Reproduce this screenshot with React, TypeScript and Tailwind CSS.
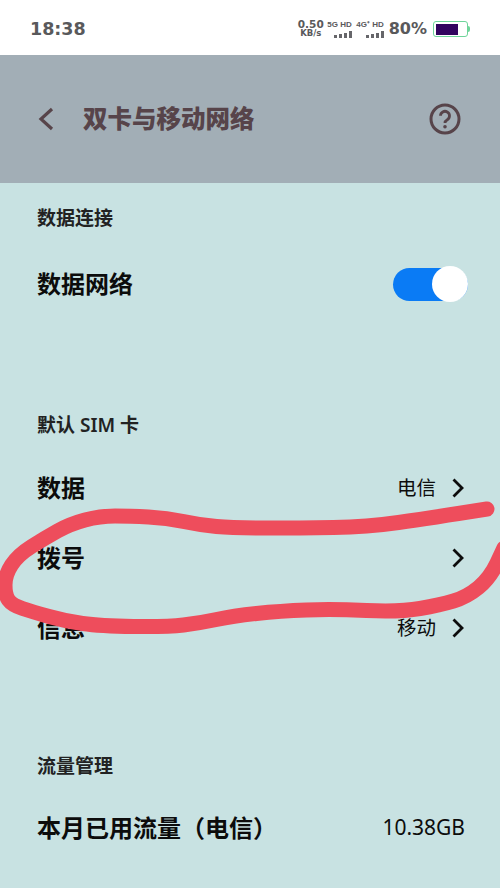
const cjk = { fontFamily: '"Noto Sans", "Noto Sans CJK SC", sans-serif' };
const dejavu = { fontFamily: '"DejaVu Sans", sans-serif' };
const arial = { fontFamily: '"Liberation Sans", sans-serif' };

// centre line of the red marker stroke, read off the reference
const scribble = [
  [487, 509], [430, 518], [367, 527], [300, 528], [233, 528], [200, 525], [167, 518], [130, 516],
  [100, 516], [70, 524], [45, 538], [18, 555], [5, 575], [5, 595], [12, 605], [33, 612],
  [65, 621], [100, 626], [167, 627], [200, 623], [233, 616], [280, 611], [333, 609], [400, 612],
  [440, 605], [467, 597], [490, 578], [504, 548],
];

function scribblePath() {
  let d = `M${scribble[0][0]} ${scribble[0][1]}`;
  for (let i = 1; i < scribble.length - 1; i++) {
    const [x, y] = scribble[i];
    const [nx, ny] = scribble[i + 1];
    d += `Q${x} ${y} ${(x + nx) / 2} ${(y + ny) / 2}`;
  }
  const [lx, ly] = scribble[scribble.length - 1];
  return d + `L${lx} ${ly}`;
}

function Bars({ count = 4 }: { count?: number }) {
  const heights = [3, 4, 5, 7];
  return (
    <div className="flex items-end gap-[2px]">
      {heights.slice(0, count).map((h, i) => (
        <div key={i} className="w-[3px] bg-[#66666a]" style={{ height: h }} />
      ))}
    </div>
  );
}

function Chevron() {
  return (
    <svg width="14" height="22" viewBox="0 0 14 22" fill="none">
      <path d="M2.500 2.500l8.500 8.500-8.500 8.500" stroke="#0c0c0c" strokeWidth="2.800" />
    </svg>
  );
}

function StatusBar() {
  return (
    <div className="h-[55px] bg-white flex items-center pt-[3px] pl-[30px] pr-[30px] text-[#59595b]">
      <span className="text-[17.5px] font-bold" style={dejavu}>
        18:38
      </span>
      <div className="ml-auto flex items-center">
        <div className="flex flex-col items-center font-bold leading-[9px] mr-[6px]" style={dejavu}>
          <span className="text-[10.5px]">0.50</span>
          <span className="text-[8.5px]">KB/s</span>
        </div>
        <div className="flex flex-col items-end gap-[3px] mr-[5px] w-[22px]">
          <span className="text-[8px] font-bold leading-[7px] whitespace-nowrap" style={arial}>5G HD</span>
          <Bars />
        </div>
        <div className="flex flex-col items-end gap-[3px] mr-[5px] w-[27px]">
          <span className="text-[8px] font-bold leading-[7px] whitespace-nowrap" style={arial}>4G⁺ HD</span>
          <Bars />
        </div>
        <span className="text-[16px] font-bold mr-[6px]" style={dejavu}>80%</span>
        <div className="flex items-center">
          <div className="w-[35px] h-[16px] rounded-[3px] border border-[#6fd49a] p-[1.5px] pr-[9px] bg-white">
            <div className="h-full bg-[#32045f]" />
          </div>
          <div className="w-[2px] h-[6px] bg-[#6fd49a] rounded-r-sm" />
        </div>
      </div>
    </div>
  );
}

function SectionLabel({ children }: { children: React.ReactNode }) {
  return <div className="px-[37px] text-[19px] leading-[26px] font-semibold text-[#222]">{children}</div>;
}

function Row({ title, value, arrow = true, big = false }: { title: string; value?: string; arrow?: boolean; big?: boolean }) {
  return (
    <div className="h-[70px] pl-[37px] pr-[35px] flex items-center justify-between text-[#0c0c0c]">
      <span className="text-[24px] font-bold">{title}</span>
      <div className="flex items-center gap-[15px]">
        {value && <span className={big ? "text-[21px]" : "text-[19.5px]"}>{value}</span>}
        {arrow && <Chevron />}
      </div>
    </div>
  );
}

export default function App() {
  return (
    <div className="relative w-[500px] h-[888px] overflow-hidden bg-[#c8e2e2]" style={cjk}>
      <StatusBar />

      <div className="h-[128px] bg-[#a2aeb6] flex items-center pl-[37px] pr-[39px] text-[#57444a]">
        <svg width="18" height="26" viewBox="0 0 18 26" fill="none">
          <path d="M15 3L4 13l11 10" stroke="#57444a" strokeWidth="3.200" />
        </svg>
        <h1 className="ml-[28px] text-[24.5px] font-black">双卡与移动网络</h1>
        <svg className="ml-auto" width="32" height="32" viewBox="0 0 32 32" fill="none">
          <circle cx="16" cy="16" r="14" stroke="#57444a" strokeWidth="3" />
          <path d="M11.500 12.800a4.500 4.500 0 1 1 6.800 3.900c-1.500.9-2.300 1.700-2.300 3.300" stroke="#57444a" strokeWidth="2.800" fill="none" />
          <circle cx="16" cy="23.800" r="1.800" fill="#57444a" />
        </svg>
      </div>

      <div className="pt-[22px]">
        <SectionLabel>数据连接</SectionLabel>
        <div className="h-[106px] pl-[37px] pr-[32px] flex items-center justify-between">
          <span className="text-[24px] font-bold text-[#0c0c0c]">数据网络</span>
          <div className="w-[75px] h-[33px] rounded-full bg-[#0a7bf5] flex items-center justify-end">
            <div className="w-[36px] h-[36px] rounded-full bg-white" />
          </div>
        </div>

        <div className="mt-[75px]">
          <SectionLabel>默认 SIM 卡</SectionLabel>
        </div>
        <div className="mt-[15px]">
          <Row title="数据" value="电信" />
          <Row title="拨号" />
          <Row title="信息" value="移动" />
        </div>

        <div className="mt-[90px]">
          <SectionLabel>流量管理</SectionLabel>
        </div>
        <div className="mt-[14px]">
          <Row title="本月已用流量（电信）" value="10.38GB" arrow={false} big />
        </div>
      </div>

      {/* hand-drawn circle over the 拨号 row */}
      <svg className="absolute inset-0 pointer-events-none" width="500" height="888" viewBox="0 0 500 888" fill="none">
        <path d={scribblePath()} stroke="#ee4d5c" strokeWidth="15" strokeLinecap="round" strokeLinejoin="round" />
      </svg>
    </div>
  );
}
